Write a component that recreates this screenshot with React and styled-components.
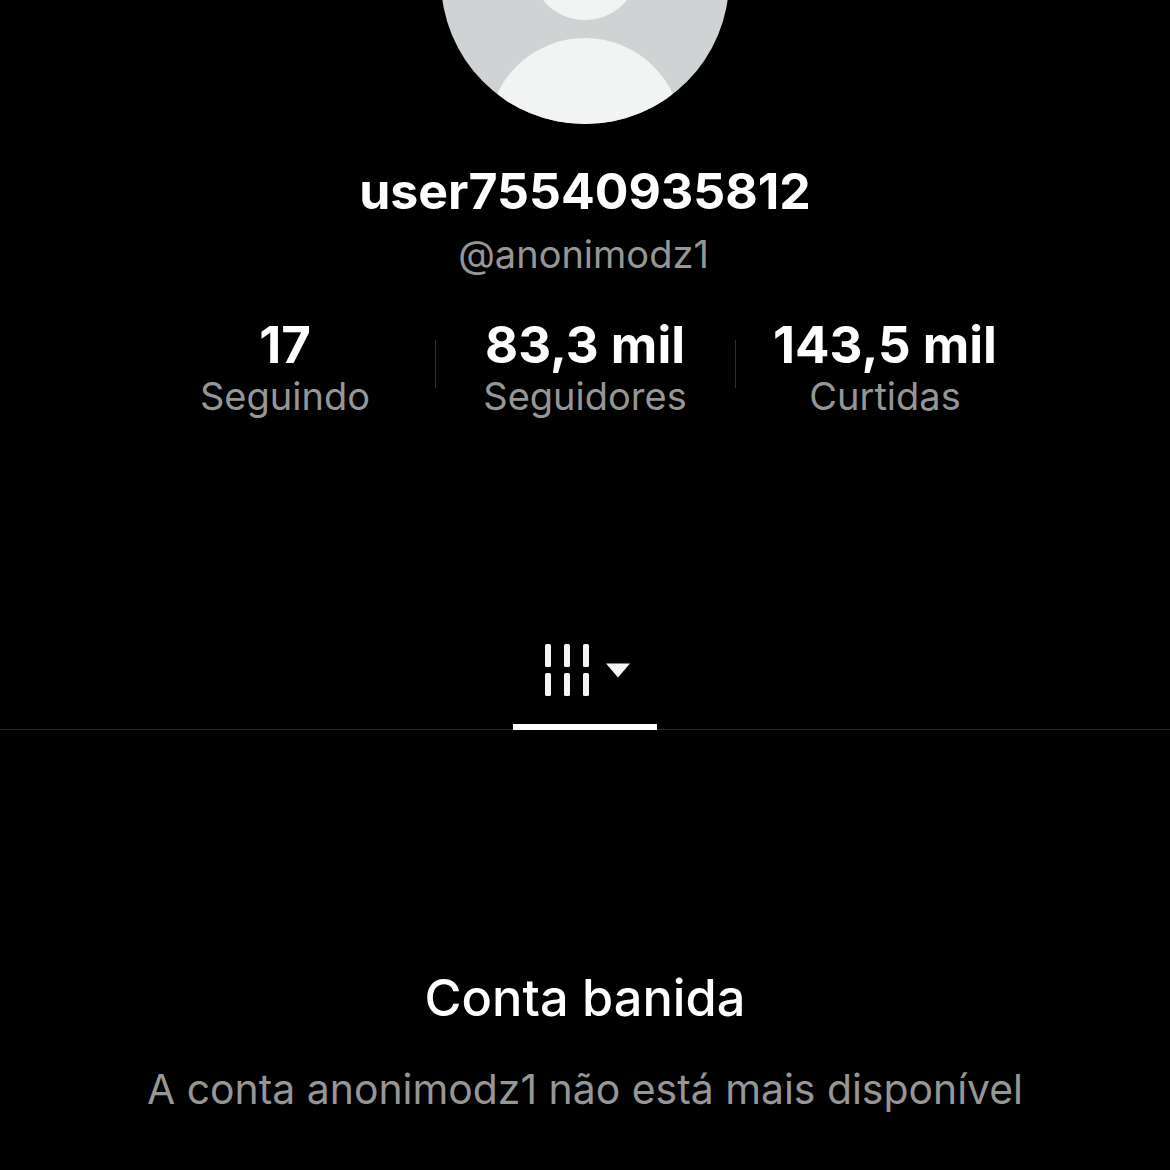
import React from "react";
import styled, { createGlobalStyle } from "styled-components";

const GlobalStyle = createGlobalStyle`
  html, body {
    margin: 0;
    padding: 0;
    background: #000;
  }
`;

const stats = [
  { value: "17", label: "Seguindo" },
  { value: "83,3 mil", label: "Seguidores" },
  { value: "143,5 mil", label: "Curtidas" },
];

const App = () => {
  return (
    <Page>
      <GlobalStyle />
      <Avatar viewBox="0 0 288 288">
        <defs>
          <clipPath id="avatar-clip">
            <circle cx="144" cy="144" r="144" />
          </clipPath>
        </defs>
        <g clipPath="url(#avatar-clip)">
          <rect width="288" height="288" fill="#cfd3d3" />
          <circle cx="144" cy="130" r="54" fill="#f2f3f3" />
          <circle cx="144" cy="299" r="97" fill="#f2f3f3" />
        </g>
      </Avatar>
      <Name>user75540935812</Name>
      <Handle>@anonimodz1</Handle>
      <Stats>
        {stats.map((s) => (
          <Stat key={s.label}>
            <StatValue>{s.value}</StatValue>
            <StatLabel>{s.label}</StatLabel>
          </Stat>
        ))}
      </Stats>
      <TabBar>
        <Tab>
          <svg width="86" height="52" viewBox="0 0 86 52">
            <g fill="#f5f5f5">
              <rect x="1" y="0" width="6" height="23" rx="1.5" />
              <rect x="20" y="0" width="6" height="23" rx="1.5" />
              <rect x="39" y="0" width="6" height="23" rx="1.5" />
              <rect x="1" y="29" width="6" height="23" rx="1.5" />
              <rect x="20" y="29" width="6" height="23" rx="1.5" />
              <rect x="39" y="29" width="6" height="23" rx="1.5" />
              <path d="M62 19.500h24l-12 14z" />
            </g>
          </svg>
        </Tab>
      </TabBar>
      <Title>Conta banida</Title>
      <Message>A conta anonimodz1 não está mais disponível</Message>
    </Page>
  );
};

const Page = styled.div`
  width: 1170px;
  height: 1170px;
  overflow: hidden;
  background: #000;
  display: flex;
  flex-direction: column;
  align-items: center;
  font-family: Inter, "Liberation Sans", sans-serif;
`;

const Avatar = styled.svg`
  flex: none;
  display: block;
  width: 288px;
  height: 288px;
  margin-top: -164px;
`;

const Name = styled.div`
  margin-top: 37px;
  font-size: 50px;
  line-height: 60px;
  font-weight: 700;
  color: #fff;
`;

const Handle = styled.div`
  margin-top: 10px;
  margin-right: 3px;
  font-size: 38px;
  line-height: 46px;
  color: #969696;
`;

const Stats = styled.div`
  display: flex;
  justify-content: center;
  margin-top: 38px;
`;

const Stat = styled.div`
  position: relative;
  width: 300px;
  display: flex;
  flex-direction: column;
  align-items: center;

  & + &::before {
    content: "";
    position: absolute;
    left: 0;
    top: 25px;
    width: 1px;
    height: 48px;
    background: #2e2e2e;
  }
`;

const StatValue = styled.div`
  font-size: 51px;
  line-height: 60px;
  font-weight: 700;
  color: #fff;
`;

const StatLabel = styled.div`
  margin-top: -2px;
  font-size: 38px;
  line-height: 46px;
  color: #969696;
`;

const TabBar = styled.div`
  align-self: stretch;
  display: flex;
  justify-content: center;
  margin-top: 205px;
  border-bottom: 1px solid #262626;
`;

const Tab = styled.div`
  box-sizing: border-box;
  width: 144px;
  height: 106px;
  margin-bottom: -1px;
  padding: 20px 0 0 31px;
  border-bottom: 6px solid #fff;

  svg {
    display: block;
  }
`;

const Title = styled.div`
  margin-top: 238px;
  font-size: 50.5px;
  line-height: 60px;
  font-weight: 500;
  color: #fff;
`;

const Message = styled.div`
  margin-top: 38px;
  font-size: 40.9px;
  line-height: 46px;
  color: #969696;
`;

export default App;
